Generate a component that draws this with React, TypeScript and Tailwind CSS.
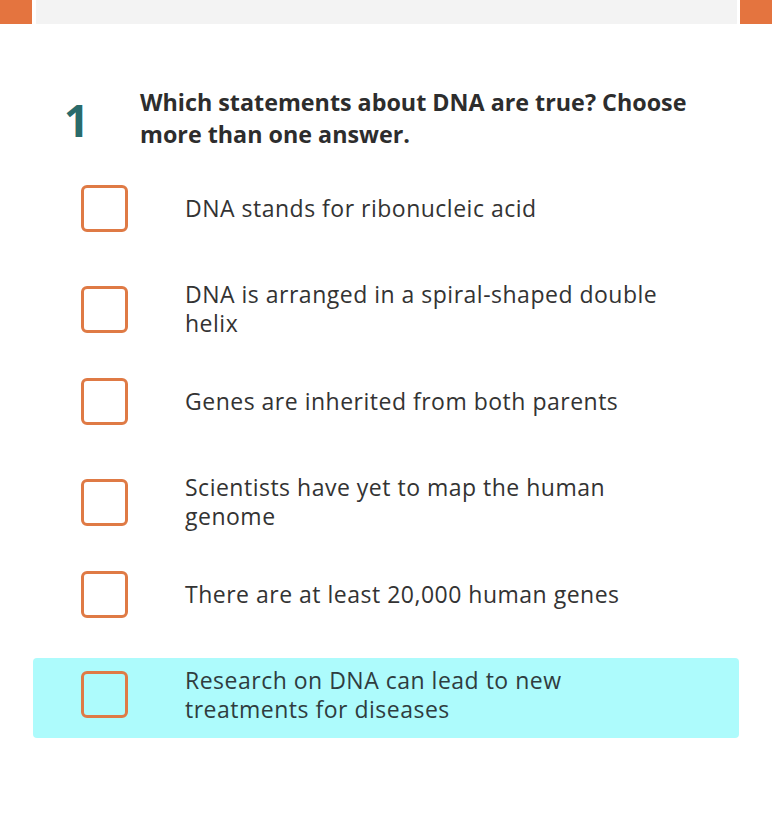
const options = [
  { text: 'DNA stands for ribonucleic acid', mt: 'mt-0' },
  { text: 'DNA is arranged in a spiral-shaped double helix', mt: 'mt-[21px]' },
  { text: 'Genes are inherited from both parents', mt: 'mt-[12px]' },
  { text: 'Scientists have yet to map the human genome', mt: 'mt-[21px]' },
  { text: 'There are at least 20,000 human genes', mt: 'mt-[12px]' },
]

function Checkbox() {
  return <div className="w-[47px] h-[47px] shrink-0 rounded-[6px] border-[3px] border-[#df7a45]" />
}

export default function App() {
  return (
    <div className="w-[772px] h-[827px] bg-white font-['Open_Sans',sans-serif] text-[#333333]">
      <div className="flex h-[24px]">
        <div className="w-[32px] bg-[#e4743f]" />
        <div className="ml-[4px] flex-1 bg-[#f3f3f3]" />
        <div className="ml-[3px] w-[32px] bg-[#e4743f]" />
      </div>

      <div className="flex mt-[62px] pl-[64px]">
        <div className="w-[76px] shrink-0 text-[44px] font-bold leading-[1] text-[#2a6b6b] mt-[12px]">1</div>
        <h1 className="w-[575px] text-[23.3px] font-bold leading-[32px] text-[#2d2d2d]">
          Which statements about DNA are true? Choose more than one answer.
        </h1>
      </div>

      <div className="mt-[18px] mx-[33px]">
        {options.map((o) => (
          <div key={o.text} className={`flex items-center h-[80px] pl-[48px] ${o.mt}`}>
            <Checkbox />
            <p className="ml-[57px] w-[495px] text-[23px] tracking-[0.5px] leading-[29px]">{o.text}</p>
          </div>
        ))}
        <div className="flex items-start h-[80px] mt-[24px] pl-[48px] pt-[13px] rounded-[4px] bg-[#adfbfc]">
          <Checkbox />
          <p className="ml-[57px] -mt-[5px] w-[495px] text-[23px] tracking-[0.5px] leading-[29px] text-[#2f3d3f]">
            Research on DNA can lead to new treatments for diseases
          </p>
        </div>
      </div>
    </div>
  )
}
